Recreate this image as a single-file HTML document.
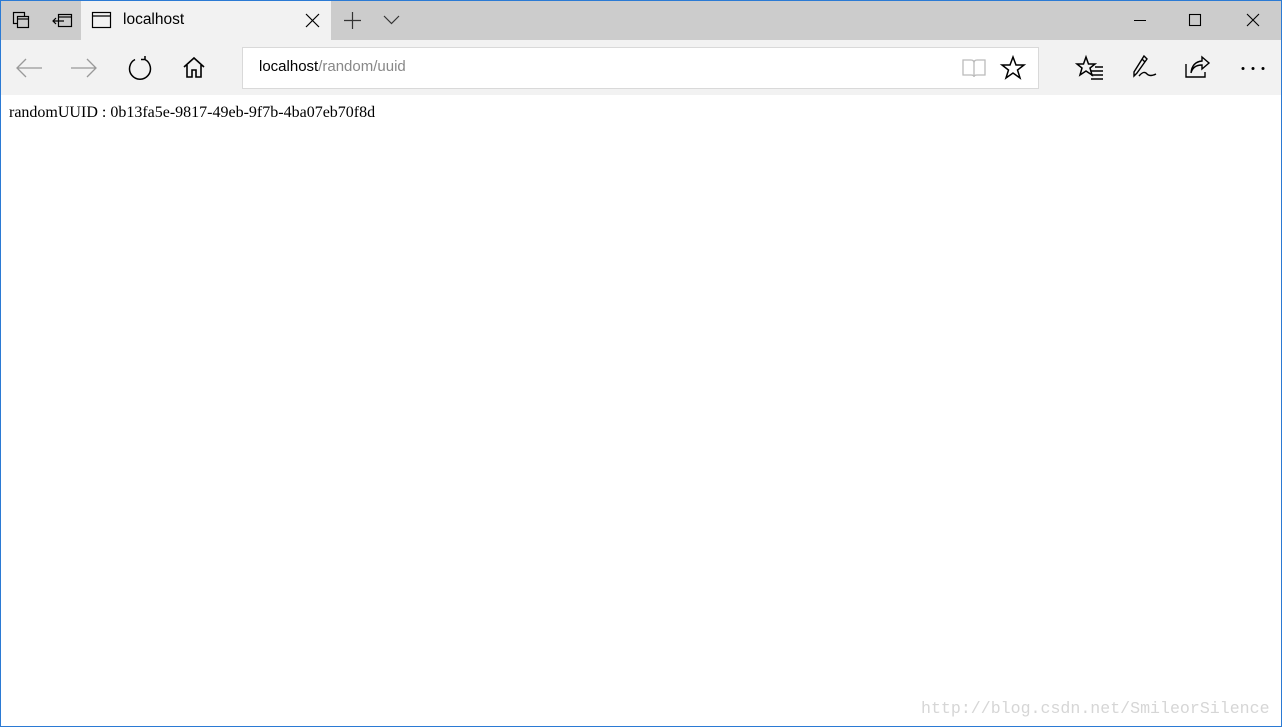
<!DOCTYPE html><html><head><style>
body{margin:0;width:1282px;height:727px;overflow:hidden;position:relative;background:#fff;font-family:"Liberation Sans",sans-serif}
.win{position:absolute;left:0;top:0;width:1280px;height:725px;border:1px solid #2b7ad4;}
.title{position:absolute;left:0;top:0;width:1280px;height:39px;background:#cccccc}
.tab{position:absolute;left:80px;top:0;width:250px;height:39px;background:#f2f2f2}
.tool{position:absolute;left:0;top:39px;width:1280px;height:55px;background:#f2f2f2}
.addr{position:absolute;left:241px;top:7px;width:795px;height:40px;background:#fff;border:1px solid #d9d9d9}
svg{position:absolute;overflow:visible}
.t{position:absolute}
</style></head><body><div class="win">
<div class="title">
<svg style="left:12px;top:11px" width="18" height="18" fill="none" stroke="#000" stroke-width="1.2"><rect x="0.5" y="0.5" width="11" height="11"/><rect x="4.5" y="4.5" width="11" height="11" fill="#ccc"/><line x1="4.5" y1="7" x2="15.5" y2="7"/></svg>
<svg style="left:52px;top:13px" width="20" height="14" fill="none" stroke="#000" stroke-width="1.2"><rect x="5.5" y="0.5" width="13" height="12"/><line x1="5.5" y1="3" x2="18.5" y2="3"/><path d="M0 7H11M3 4L0 7L3 10"/></svg>
<div class="tab">
<svg style="left:11px;top:11px" width="20" height="16" fill="none" stroke="#000" stroke-width="1.2"><rect x="0.5" y="0.5" width="18" height="15"/><line x1="0.5" y1="4" x2="18.5" y2="4"/></svg>
<div class="t" style="left:42px;top:10px;font-size:15.5px;color:#000">localhost</div>
<svg style="left:225px;top:13px" width="13" height="13" stroke="#000" stroke-width="1.2"><path d="M0 0L13 13M13 0L0 13"/></svg>
</div>
<svg style="left:343px;top:11px" width="17" height="17" stroke="#333" stroke-width="1.2"><path d="M8.5 0V17M0 8.5H17"/></svg>
<svg style="left:383px;top:15px" width="15" height="9" fill="none" stroke="#333" stroke-width="1.2"><path d="M0 0L7.5 7.5L15 0"/></svg>
<svg style="left:1133px;top:19px" width="12" height="2" stroke="#000"><path d="M0 0.5H12"/></svg>
<svg style="left:1188px;top:13px" width="12" height="12" fill="none" stroke="#000" stroke-width="1.1"><rect x="0.5" y="0.5" width="11" height="11"/></svg>
<svg style="left:1246px;top:13px" width="12" height="12" stroke="#000" stroke-width="1.1"><path d="M0 0L12 12M12 0L0 12"/></svg>
</div>
<div class="tool">
<svg style="left:16px;top:19px" width="25" height="18" fill="none" stroke="#999" stroke-width="1.3"><path d="M0 9H25M9 0L0 9L9 18"/></svg>
<svg style="left:70px;top:19px" width="25" height="18" fill="none" stroke="#999" stroke-width="1.3"><path d="M0 9H25M16 0L25 9L16 18"/></svg>
<svg style="left:127px;top:17px" width="24" height="24" fill="none" stroke="#000" stroke-width="1.5"><path d="M7 2.5A10.5 10.5 0 1 0 17 2.5M17 2.5V-1M17 2.5H13"/></svg>
<svg style="left:182px;top:17px" width="22" height="21" fill="none" stroke="#000" stroke-width="1.6"><path d="M1 10L11 1L21 10M4 8V20H9V13H13V20H18V8"/></svg>
<div class="addr">
<div class="t" style="left:16px;top:10px;font-size:15px;color:#000">localhost<span style="color:#888">/random/uuid</span></div>
<svg style="left:719px;top:10px" width="24" height="20" fill="none" stroke="#bbb" stroke-width="1.3"><path d="M1 2H9Q12 2 12 5V19Q12 17 9 17H1ZM23 2H15Q12 2 12 5V19Q12 17 15 17H23Z"/></svg>
<svg style="left:758px;top:8px" width="24" height="23" fill="none" stroke="#000" stroke-width="1.5"><path d="M12 1L15 9H23L16.5 14L19 22L12 17L5 22L7.5 14L1 9H9Z"/></svg>
</div>
<svg style="left:1075px;top:16px" width="28" height="24" fill="none" stroke="#000" stroke-width="1.5"><path d="M10 1L12.5 8H19L14 12L16 19L10 15L4 19L6 12L1 8H7.5Z"/><path d="M15 15H27M15 19H27M15 23H27M19 11H27"/></svg>
<svg style="left:1131px;top:15px" width="26" height="25" fill="none" stroke="#000" stroke-width="1.4"><path d="M12 1L15 4L5 18L2 21L2 17ZM10 4L13 7M7 21Q12 15 15 19Q18 22 24 19"/></svg>
<svg style="left:1184px;top:16px" width="26" height="22" fill="none" stroke="#000" stroke-width="1.4"><path d="M1 8V21H20V16"/><path d="M6 17Q8 9 17 9V13L24 7L17 1V5Q7 6 6 17Z"/></svg>
<svg style="left:1240px;top:27px" width="26" height="4" fill="#000"><circle cx="2" cy="1.5" r="1.5"/><circle cx="12" cy="1.5" r="1.5"/><circle cx="22" cy="1.5" r="1.5"/></svg>
</div>
<div class="t" style="left:8px;top:103px;font-family:'Liberation Serif',serif;font-size:16px;color:#000">randomUUID : 0b13fa5e-9817-49eb-9f7b-4ba07eb70f8d</div>
<div class="t" style="left:920px;top:698px;font-family:'Liberation Mono',monospace;font-size:16.6px;color:#d6d6d6">http://blog.csdn.net/SmileorSilence</div>
</div></body></html>
